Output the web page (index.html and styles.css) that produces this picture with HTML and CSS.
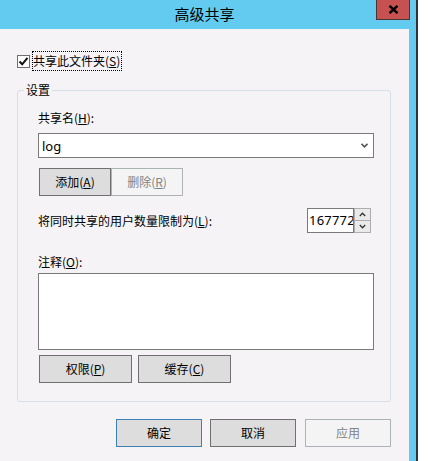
FILE: index.html
```html
<!DOCTYPE html>
<html lang="zh-CN">
<head>
<meta charset="utf-8">
<title>高级共享</title>
<link rel="stylesheet" href="styles.css">
</head>
<body>
<div class="desktop">
  <div class="window">
    <div class="titlebar">
      <div class="title">高级共享</div>
      <div class="close">
        <svg width="11" height="9" viewBox="0 0 11 9"><path d="M1.5 0.8 L9.5 8.2 M9.5 0.8 L1.5 8.2" stroke="#000" stroke-width="2.4" fill="none"/></svg>
      </div>
    </div>
    <div class="client">
      <div class="check-row">
        <span class="checkbox">
          <svg width="11" height="11" viewBox="0 0 11 11"><path d="M1.5 5.5 L4.2 8.3 L9.5 1.8" stroke="#111" stroke-width="2" fill="none"/></svg>
        </span>
        <span class="focus-label">共享此文件夹(<u>S</u>)</span>
      </div>

      <div class="group">
        <div class="group-title">设置</div>
        <div class="label first">共享名(<u>H</u>):</div>
        <div class="combo">
          <span class="combo-text">log</span>
          <svg class="combo-arrow" width="7" height="5" viewBox="0 0 7 5"><path d="M0.5 0.8 L3.5 3.8 L6.5 0.8" stroke="#555" stroke-width="1.6" fill="none"/></svg>
        </div>
        <div class="btn-row">
          <div class="btn btn-small first-btn">添加(<u>A</u>)</div>
          <div class="btn btn-small disabled">删除(<u>R</u>)</div>
        </div>
        <div class="limit-row">
          <div class="limit-label">将同时共享的用户数量限制为(<u>L</u>):</div>
          <div class="spinner">
            <div class="spin-input">167772</div>
            <div class="spin-buttons">
              <div class="spin-btn up"><svg width="7" height="5" viewBox="0 0 7 5"><path d="M0.8 4 L3.5 1.2 L6.2 4" stroke="#333" stroke-width="1.3" fill="none"/></svg></div>
              <div class="spin-btn down"><svg width="7" height="5" viewBox="0 0 7 5"><path d="M0.8 1 L3.5 3.8 L6.2 1" stroke="#333" stroke-width="1.3" fill="none"/></svg></div>
            </div>
          </div>
        </div>
        <div class="label comment-label">注释(<u>O</u>):</div>
        <div class="memo"></div>
        <div class="btn-row lower">
          <div class="btn btn-wide first-btn">权限(<u>P</u>)</div>
          <div class="btn btn-wide">缓存(<u>C</u>)</div>
        </div>
      </div>

      <div class="footer">
        <div class="btn btn-footer default">确定</div>
        <div class="btn btn-footer">取消</div>
        <div class="btn btn-footer disabled apply">应用</div>
      </div>
    </div>
  </div>
  <div class="edge"></div>
  <div class="outside"></div>
</div>
</body>
</html>
```

FILE: styles.css
```css
* { box-sizing: border-box; }

html, body {
  margin: 0;
  padding: 0;
  background: #ffffff;
}

body {
  font-family: "Noto Sans", "Noto Sans CJK SC", sans-serif;
  font-size: 12px;
  color: #000;
}

.desktop {
  display: flex;
  width: 428px;
  height: 461px;
  overflow: hidden;
}

.window {
  width: 416px;
  height: 461px;
  background: #62cbef;
  display: flex;
  flex-direction: column;
  padding-right: 7px;
}

.edge {
  width: 2px;
  height: 461px;
  background: #2f3336;
}

.outside {
  flex: 1;
  background: #ffffff;
}

.titlebar {
  position: relative;
  height: 29px;
  flex: none;
}

.title {
  text-align: center;
  line-height: 28px;
  font-size: 15px;
  font-family: "Noto Sans CJK SC", sans-serif;
  color: #000;
}

.close {
  position: absolute;
  top: 0;
  right: -1px;
  width: 34px;
  height: 20px;
  background: #c75050;
  border: 1px solid #4a3535;
  border-top: none;
  display: flex;
  align-items: center;
  justify-content: center;
}

.client {
  flex: 1;
  background: #f6f3f6;
  display: flex;
  flex-direction: column;
}

.check-row {
  display: flex;
  align-items: center;
  margin-top: 22px;
  margin-left: 17px;
  height: 20px;
}

.checkbox {
  width: 13px;
  height: 13px;
  border: 1px solid #6f6f6f;
  background: #fff;
  display: flex;
  align-items: center;
  justify-content: center;
}

.focus-label {
  margin-left: 2px;
  height: 20px;
  line-height: 18px;
  border: 1px dotted #000;
  padding: 0 1px 0 0;
  font-family: "Noto Sans CJK SC", sans-serif;
}

.group {
  margin-top: 19px;
  margin-left: 17px;
  width: 374px;
  border: 1px solid #d5dfe5;
  border-radius: 3px;
  padding: 0 16px 18px 20px;
  display: flex;
  flex-direction: column;
}

.group-title {
  align-self: flex-start;
  margin: -9px 0 0 -14px;
  padding: 0 2px;
  line-height: 16px;
  background: #f6f3f6;
  font-family: "Noto Sans CJK SC", sans-serif;
}

.label {
  line-height: 16px;
  font-family: "Noto Sans CJK SC", sans-serif;
}

.label.first { margin-top: 12px; }

.combo {
  margin-top: 7px;
  height: 25px;
  border: 1px solid #7a7a7a;
  background: #fff;
  display: flex;
  align-items: center;
  padding: 0 5px 0 3px;
}

.combo-text {
  flex: 1;
  font-size: 13px;
  line-height: 16px;
}

.combo-arrow { display: block; }

.btn-row {
  display: flex;
  margin-top: 10px;
}

.btn-row.lower {
  margin-top: 5px;
  gap: 6px;
}

.btn {
  height: 28px;
  background: #dddddd;
  border: 1px solid #707070;
  display: flex;
  align-items: center;
  justify-content: center;
  font-family: "Noto Sans CJK SC", sans-serif;
  line-height: 16px;
}

.btn.disabled {
  background: #f4f4f4;
  border-color: #adb2b5;
  color: #838383;
}

.first-btn { margin-left: 1px; }

.btn-small { width: 72px; }
.btn-wide { width: 93px; }

.limit-row {
  display: flex;
  align-items: center;
  margin-top: 12px;
  height: 25px;
}

.limit-label {
  flex: 1;
  line-height: 16px;
  font-family: "Noto Sans CJK SC", sans-serif;
}

.spinner {
  display: flex;
  margin-right: 3px;
  height: 25px;
}

.spin-input {
  width: 47px;
  height: 25px;
  border: 1px solid #7a7a7a;
  background: #fff;
  font-size: 13px;
  line-height: 23px;
  padding-left: 1px;
  overflow: hidden;
  white-space: nowrap;
  letter-spacing: 0.2px;
}

.spin-buttons {
  width: 17px;
  display: flex;
  flex-direction: column;
  border: 1px solid #adadad;
  background: #adadad;
  gap: 1px;
}

.spin-btn {
  flex: 1;
  background: #eaeaea;
  display: flex;
  align-items: center;
  justify-content: center;
}

.comment-label { margin-top: 21px; }

.memo {
  margin-top: 3px;
  height: 77px;
  border: 1px solid #7a7a7a;
  background: #fff;
}

.footer {
  display: flex;
  justify-content: flex-end;
  gap: 8px;
  margin-top: 17px;
  padding-right: 18px;
}

.btn-footer { width: 86px; }

.btn.default { border-color: #3c7fb1; }

.apply { margin-left: 1px; }
```
